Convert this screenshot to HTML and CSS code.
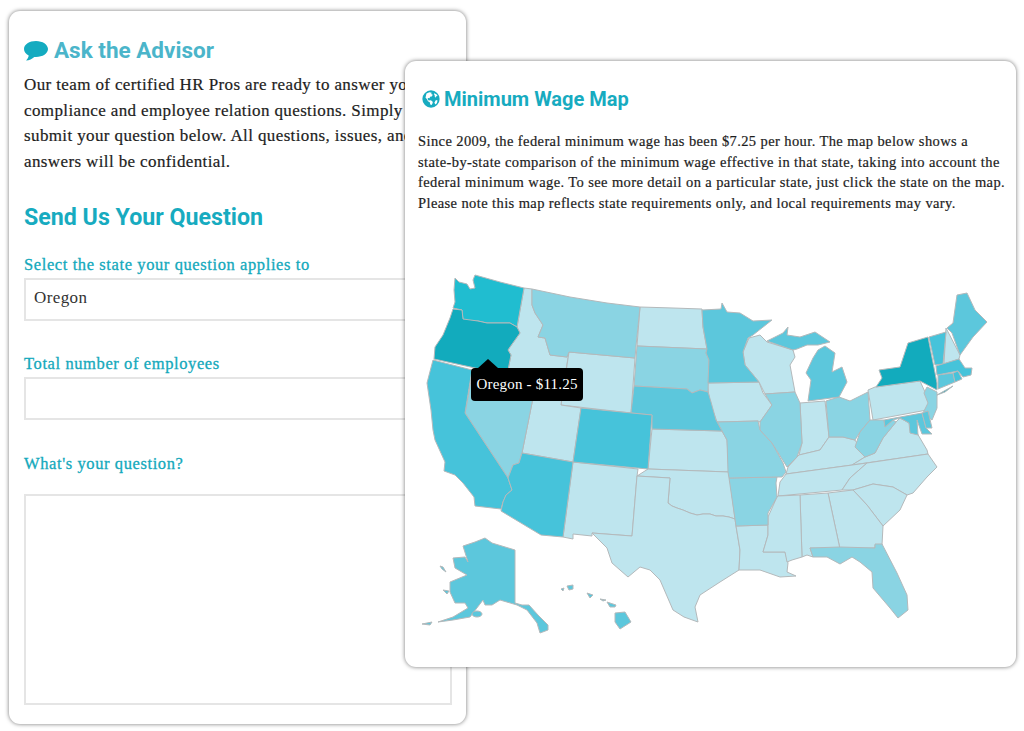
FILE: index.html
```html
<!DOCTYPE html>
<html lang="en">
<head>
    <meta charset="UTF-8">
    <title>Ask the Advisor - Minimum Wage Map</title>
    <link rel="stylesheet" href="styles.css">
</head>
<body>
    <div class="card advisor">
        <h2 class="advisor-title">
            <svg class="icon-comment" viewBox="0 0 24 20"><path d="M12 0C5.4 0 0 3.4 0 8c0 2.700 1.900 5 4.700 6.400C4.500 16.300 3.300 18.300 2 19.500c3.200-.2 6.300-1.800 8.300-3.600.6.100 1.100.1 1.700.1 6.600 0 12-3.600 12-8S18.600 0 12 0z"/></svg>
            Ask the Advisor
        </h2>
        <p class="advisor-text">Our team of certified HR Pros are ready to answer your<br>compliance and employee relation questions. Simply<br>submit your question below. All questions, issues, and<br>answers will be confidential.</p>
        <h2 class="form-title">Send Us Your Question</h2>

        <div class="form-group first">
            <label>Select the state your question applies to</label>
            <div class="input">Oregon</div>
        </div>
        <div class="form-group">
            <label>Total number of employees</label>
            <div class="input"></div>
        </div>
        <div class="form-group last">
            <label>What's your question?</label>
            <div class="textarea"></div>
        </div>
    </div>

    <div class="card wage">
        <h2 class="wage-title">
            <svg class="icon-globe" viewBox="0 0 20 20">
                <circle cx="10" cy="10" r="9.600" fill="#17abc0"/>
                <path fill="#fff" d="M5 3.800l3.200-1.300 2.600.5-.6 1.500 1.800.8-1.200 1.900-1.900.2-.4 1.800-1.800-.4-.5 1.300 1.200 1.500 2.300-.3 1.800 1.300.5 1.600-1.300 2.400-1.500-.5-.6-2.600-2-1.100-1.200-2.500-1.500-1.200.4-2.100zM13.500 3.500l2.500 1.100 1.400 2.200-1.600.1-.4 1.600-1.600-1.700.6-1.200-1.200-.6zM15.500 11l1.800.6-.8 3.200-1.800 1.200-.9-2z"/>
            </svg>
            Minimum Wage Map
        </h2>
        <p class="wage-text">Since 2009, the federal minimum wage has been $7.25 per hour. The map below shows a<br>state-by-state comparison of the minimum wage effective in that state, taking into account the<br>federal minimum wage. To see more detail on a particular state, just click the state on the map.<br>Please note this map reflects state requirements only, and local requirements may vary.</p>

        <div class="map-wrap">
            <!-- viewBox is in the same units as the screenshot so states are easy to check -->
            <svg class="map" viewBox="420 260 580 380">
                <g class="lv1">
                    <polygon points="524,288 532,289 532,305 535,313 543,325 538,337 545,338 550,355 567,357 569,352 564,382 507,375 511,355 508,350 510,347 520,333 517,327"/>
                    <polygon points="640,307 673,308 702,309 703,327 707,349 637,346"/>
                    <polygon points="569,352 635,358 631,413 561,405"/>
                    <polygon points="537,378 564,382 561,405 581,408 573,462 522,453"/>
                    <polygon points="573,462 638,469 637,476 632,536 592,533 592,536 573,534 573,539 563,537"/>
                    <polygon points="652,429 722,431 727,440 729,472 648,469"/>
                    <polygon points="648,469 729,472 735,519 729,517 723,516 716,516 710,514 703,514 697,515 690,513 683,510 677,508 672,506 668,503 670,478 637,476"/>
                    <polygon points="637,476 670,478 668,503 672,506 677,508 683,510 690,513 697,515 703,514 710,514 716,516 723,516 729,517 735,519 736,526 740,550 739,570 720,582 700,595 695,607 698,622 684,617 673,610 660,580 650,570 640,567 628,577 612,563 607,548 592,533 632,536"/>
                    <polygon points="736,526 768,525 768,535 763,552 785,552 788,563 787,572 796,576 780,577 760,570 739,570 740,550"/>
                    <polygon points="707,383 759,382 763,393 772,405 760,422 758,421 717,422 710,403"/>
                    <polygon points="749,338 760,335 767,342 793,350 795,357 790,365 795,392 765,394 759,382 745,365 743,352"/>
                    <polygon points="800,403 825,401 829,437 820,450 799,455 802,443"/>
                    <polygon points="868,390 875,387 920,381 930,403 927,410 873,420"/>
                    <polygon points="829,437 843,437 855,440 865,457 852,465 786,474 788,467 797,457 799,455 820,450"/>
                    <polygon points="896,422 900,418 909,423 917,433 927,450 928,454 852,465 865,457 875,453 883,438"/>
                    <polygon points="786,474 867,463 850,478 842,490 778,496 780,482"/>
                    <polygon points="867,463 928,454 937,467 927,477 913,493 907,495 893,487 873,484 853,490 842,490 850,478"/>
                    <polygon points="853,490 873,484 893,487 907,495 900,510 883,526 867,505"/>
                    <polygon points="828,493 853,490 867,505 883,526 882,545 875,545 875,548 840,549"/>
                    <polygon points="800,495 828,493 840,549 810,548 813,557 807,555 802,557"/>
                    <polygon points="778,496 800,495 802,557 792,560 787,562 785,552 763,552 768,535 768,517 777,497"/>
                    <polygon points="946,328 960,355 959,359 944,364"/>
                </g>
                <g class="lv2">
                    <polygon points="532,289 570,297 607,303 640,307 636,346 635,358 569,352 567,357 550,355 545,338 538,337 543,325 535,313 532,305"/>
                    <polygon points="637,346 707,349 706,353 709,360 708,392 700,390 692,393 687,389 634,386"/>
                    <polygon points="473,370 537,378 522,453 519,463 513,465 508,478 465,413"/>
                    <polygon points="729,478 777,477 776,483 777,497 768,513 768,525 736,526 735,519"/>
                    <polygon points="717,422 758,421 760,430 772,443 783,463 786,472 782,477 777,477 729,478 728,472 727,440 722,431"/>
                    <polygon points="765,394 795,392 800,403 802,443 797,457 787,467 772,443 760,430 760,422 772,405"/>
                    <polygon points="826,401 839,397 850,401 868,392 870,420 860,432 855,440 843,437 829,437"/>
                    <polygon points="870,420 884,420 885,427 893,420 896,422 883,438 875,453 865,457 855,447 860,432"/>
                    <polygon points="924,393 927,387 937,392 937,408 932,420 923,413 928,403"/>
                    <polygon points="810,548 840,547 875,548 875,544 882,544 897,573 907,595 908,610 898,618 890,608 873,588 872,572 860,562 852,557 840,564 827,557 813,557"/>
                </g>
                <g class="lv3">
                    <polygon points="634,386 687,389 692,393 700,390 708,392 711,402 716,420 722,431 652,429 652,415 631,413"/>
                    <polygon points="702,310 721,309 722,303 727,312 740,313 753,321 772,320 753,335 748,338 743,352 745,365 759,382 708,383 709,360 706,353 707,349 703,327"/>
                    <polygon points="767,341 783,333 788,327 787,335 800,337 815,332 830,342 818,345 807,345 797,349 793,350"/>
                    <polygon points="818,350 825,346 835,353 832,372 842,367 847,382 839,397 808,401 811,380 806,373 813,358"/>
                    <polygon points="947,328 953,323 957,295 967,293 975,310 987,322 973,337 960,355 952,333"/>
                    <polygon points="884,420 922,413 926,428 932,434 922,434 917,420 918,435 910,433 909,423 900,418 893,420 885,427"/>
                    <polygon points="922,413 928,411 932,428 926,428"/>
                    <polygon points="938,375 953,373 955,382 938,389"/>
                    <polygon points="463,546 475,542 485,538 492,543 515,550 515,603 522,605 529,605 538,615 548,625 548,630 540,633 537,623 527,610 517,605 500,600 492,605 485,605 483,600 470,617 453,620 438,622 453,617 468,608 465,603 455,603 450,592 450,582 467,575 455,568 453,558 465,557 468,562"/>
                    <ellipse cx="477" cy="614" rx="5" ry="3"/>
                    <polygon points="443,590 449,591 447,594"/>
                    <polygon points="440,566 443,567 446,572 442,569"/>
                    <polygon points="422,624 432,622 430,625"/>
                    <polygon points="615,613 625,612 631,622 620,629 615,622"/>
                    <polygon points="607,602 616,605 615,607 610,607"/>
                    <polygon points="600,599 606,600 603,601"/>
                    <polygon points="587,593 593,595 590,598"/>
                    <polygon points="567,586 573,585 573,589 569,590"/>
                    <polygon points="561,589 564,588 563,591"/>
                </g>
                <g class="lv4">
                    <polygon points="433,360 472,370 465,413 508,478 512,490 506,495 503,502 501,509 475,506 474,497 463,483 455,475 444,471 445,462 435,440 433,430 431,410 427,383"/>
                    <polygon points="522,453 573,462 563,537 541,535 501,511 503,502 506,495 512,490 508,478 513,465 519,463"/>
                    <polygon points="581,408 652,415 648,469 573,462"/>
                    <polygon points="929,337 946,332 943,364 935,365"/>
                    <polygon points="936,366 959,359 965,368 972,368 971,375 963,377 958,371 937,375"/>
                    <polygon points="953,373 958,371 962,379 955,382"/>
                </g>
                <g class="lv5">
                    <polygon points="455,278 459,282 467,284 470,289 475,288 473,280 475,275 500,282 524,288 517,327 510,323 487,323 478,321 470,321 463,320 462,310 453,308 455,302 454,290"/>
                </g>
                <g class="lv6">
                    <polygon points="453,309 462,310 463,319 478,321 487,323 510,323 517,327 520,333 510,347 508,350 511,355 507,375 434,359 435,347 443,335 450,318"/>
                    <polygon points="876,387 882,378 879,370 900,367 908,343 928,337 937,383 937,390 920,381"/>
                    <polygon points="937,395 953,386 945,392"/>
                </g>
            </svg>
            <div class="map-tip">Oregon - $11.25</div>
        </div>
    </div>
</body>
</html>
```

FILE: styles.css
```css
html, body {
    margin: 0;
    padding: 0;
}
body {
    position: relative;
    width: 1024px;
    height: 731px;
    overflow: hidden;
    background-color: white;
    color: #1d1d1d;
    font-family: "Liberation Serif", serif;
}
.card {
    position: absolute;
    box-sizing: border-box;
    background-color: white;
    border-radius: 11px;
    box-shadow: 0 0 4px rgba(0,0,0,0.55);
}
.advisor {
    left: 9px;
    top: 11px;
    width: 457px;
    height: 713px;
    padding: 24px 15px 0;
}
.wage {
    left: 405px;
    top: 61px;
    width: 611px;
    height: 606px;
    padding: 24px 13px 0;
}
h2 {
    margin: 0;
    font-family: Roboto, sans-serif;
    font-weight: 700;
    display: flex;
    align-items: center;
}
.advisor-title {
    font-size: 22.500px;
    line-height: 30px;
    color: #4bb5ca;
}
.icon-comment {
    width: 24px;
    height: 20px;
    margin: 2px 6px 0 0;
    fill: #14abc0;
}
.advisor-text {
    margin: 7px 0 0;
    font-size: 17px;
    line-height: 25.600px;
    letter-spacing: 0.380px;
    white-space: nowrap;
    -webkit-text-stroke: 0.2px #1d1d1d;
}
.form-title {
    margin-top: 28px;
    font-size: 23.200px;
    line-height: 30px;
    color: #17abc0;
}
.form-group {
    margin-top: 33px;
}
.form-group.first {
    margin-top: 23px;
}
.form-group.last {
    margin-top: 34px;
}
label {
    display: block;
    margin-bottom: 3px;
    font-size: 16.500px;
    line-height: 20px;
    color: #14a9bc;
    letter-spacing: 0.600px;
    -webkit-text-stroke: 0.3px #14a9bc;
}
.input {
    box-sizing: border-box;
    width: 428px;
    height: 43px;
    padding: 0 8px;
    border: 2px solid #e5e5e5;
    font-size: 17px;
    line-height: 36px;
    letter-spacing: 0.400px;
    color: #333;
}
.textarea {
    box-sizing: border-box;
    width: 428px;
    height: 211px;
    margin-top: 20px;
    border: 2px solid #e5e5e5;
}
.wage-title {
    margin-left: 4px;
    font-size: 20px;
    line-height: 28px;
    color: #17abc0;
}
.icon-globe {
    width: 18px;
    height: 18px;
    margin-right: 4px;
}
.wage-text {
    margin: 18px 0 0;
    font-size: 14.500px;
    line-height: 20.600px;
    white-space: nowrap;
    letter-spacing: 0.400px;
    -webkit-text-stroke: 0.2px #1d1d1d;
}
.map-wrap {
    position: relative;
    margin: 0;
}
.map {
    display: block;
    position: absolute;
    left: 2px;
    top: 47px;
    width: 580px;
    height: 380px;
}
.map polygon, .map ellipse {
    stroke: #b4b9bb;
    stroke-width: 1;
    stroke-linejoin: round;
}
.lv1 { fill: #bee5ee; }
.lv2 { fill: #8ad4e3; }
.lv3 { fill: #5cc7dc; }
.lv4 { fill: #46c3da; }
.lv5 { fill: #20bdd0; }
.lv6 { fill: #12abbd; }
.map-tip {
    position: absolute;
    left: 53px;
    top: 155px;
    width: 112px;
    height: 33px;
    background-color: black;
    border-radius: 4px;
    color: white;
    font-size: 15px;
    line-height: 32px;
    text-align: center;
    letter-spacing: 0.200px;
}
.map-tip:before {
    content: "";
    position: absolute;
    left: 7px;
    top: -9px;
    border-left: 10px solid transparent;
    border-right: 10px solid transparent;
    border-bottom: 9px solid black;
}
```
